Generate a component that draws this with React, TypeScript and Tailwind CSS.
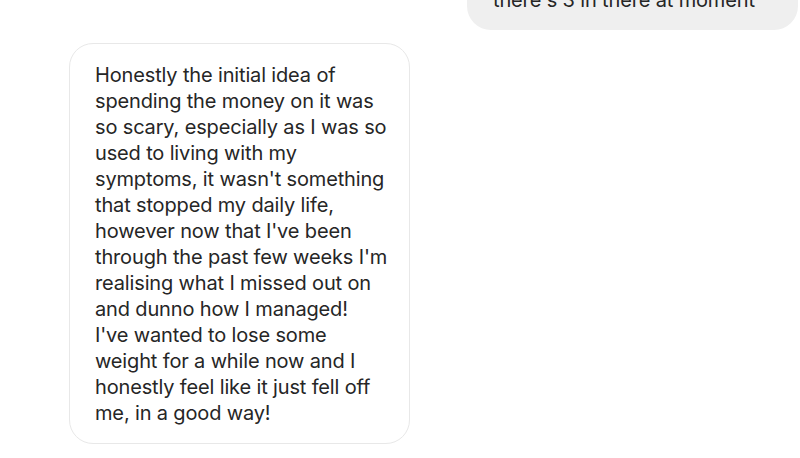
export default function App() {
  const lines = [
    'Honestly the initial idea of',
    'spending the money on it was',
    'so scary, especially as I was so',
    'used to living with my',
    "symptoms, it wasn't something",
    'that stopped my daily life,',
    "however now that I've been",
    "through the past few weeks I'm",
    'realising what I missed out on',
    'and dunno how I managed!',
    "I've wanted to lose some",
    'weight for a while now and I',
    'honestly feel like it just fell off',
    'me, in a good way!',
  ];

  return (
    <div className="w-[800px] h-[458px] overflow-hidden bg-white flex flex-col text-[#262626] text-[20px] leading-[26px] tracking-[-0.15px] font-['Inter','Helvetica_Neue',Arial,sans-serif]">
      {/* sent message, cut off at the top */}
      <div className="self-end mr-[2px] -mt-[31px] w-[331px] rounded-[24px] bg-[#efefef] pl-[26px] pt-[18px] pb-[17px] whitespace-nowrap">
        there's 3 in there at moment
      </div>

      {/* received message */}
      <div className="ml-[69px] mt-[13px] w-[341px] rounded-[24px] border border-[#e8e8e8] bg-white pl-[25px] pt-[18px] pb-[17px]">
        {lines.map((line, i) => (
          <div key={i} className="whitespace-nowrap">
            {line}
          </div>
        ))}
      </div>
    </div>
  );
}
